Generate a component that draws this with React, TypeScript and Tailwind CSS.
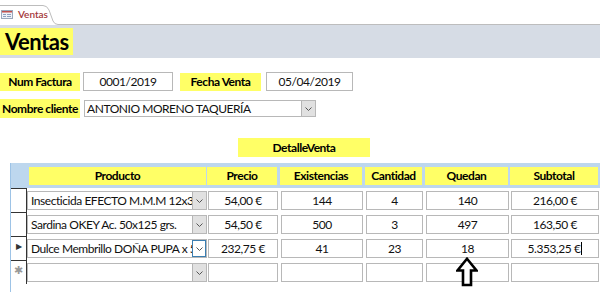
import React from "react";

const yellow = "bg-[#ffff66]";
const txt = "text-[12px] tracking-[-0.45px]";

type Row = {
  producto: string;
  precio: string;
  existencias: string;
  cantidad: string;
  quedan: string;
  subtotal: string;
  marker?: "current" | "new";
};

const rows: Row[] = [
  { producto: "Insecticida EFECTO M.M.M 12x36", precio: "54,00 €", existencias: "144", cantidad: "4", quedan: "140", subtotal: "216,00 €" },
  { producto: "Sardina OKEY Ac. 50x125 grs.", precio: "54,50 €", existencias: "500", cantidad: "3", quedan: "497", subtotal: "163,50 €" },
  { producto: "Dulce Membrillo DOÑA PUPA x 5 kg.", precio: "232,75 €", existencias: "41", cantidad: "23", quedan: "18", subtotal: "5.353,25 €", marker: "current" },
  { producto: "", precio: "", existencias: "", cantidad: "", quedan: "", subtotal: "", marker: "new" },
];

const Chevron = () => (
  <svg width="7" height="4" viewBox="0 0 7 4">
    <path d="M0.5 0.5 L3.5 3.5 L6.5 0.5" fill="none" stroke="#555" strokeWidth="1" />
  </svg>
);

const ComboArrow = ({ active }: { active?: boolean }) => (
  <div
    className={
      active
        ? "flex h-full w-[14px] shrink-0 items-center justify-center border border-[#3c7fb1] bg-white"
        : "flex h-full w-[14px] shrink-0 items-center justify-center border-l border-[#b5b5b5] bg-[#e1e1e1]"
    }
  >
    <Chevron />
  </div>
);

const Cell = ({ w, ml, children, combo, active }: { w: string; ml: string; children?: React.ReactNode; combo?: boolean; active?: boolean }) => (
  <div className={`${w} ${ml} flex h-[19px] items-stretch overflow-hidden border border-[#b8b8b8] bg-white`}>
    {combo ? (
      <>
        <div className={`${txt} flex-1 overflow-hidden whitespace-nowrap pl-[3px] leading-[17px]`}>{children}</div>
        <ComboArrow active={active} />
      </>
    ) : (
      <div className={`${txt} flex-1 whitespace-nowrap text-center leading-[17px]`}>{children}</div>
    )}
  </div>
);

const FormIcon = () => (
  <svg width="12" height="9" viewBox="0 0 12 9">
    <rect x="0.5" y="0.5" width="11" height="8" fill="#eef2f8" stroke="#9aa7bb" />
    <rect x="1" y="1" width="10" height="1.5" fill="#c0504d" />
    <rect x="2" y="4" width="3" height="1" fill="#8da0bf" />
    <rect x="6" y="4" width="4" height="1" fill="#8da0bf" />
    <rect x="2" y="6" width="3" height="1" fill="#8da0bf" />
    <rect x="6" y="6" width="4" height="1" fill="#8da0bf" />
  </svg>
);

const Label = ({ className, children }: { className: string; children: React.ReactNode }) => (
  <div className={`${yellow} ${txt} ${className} whitespace-nowrap text-center font-bold text-black`}>{children}</div>
);

export default function App() {
  return (
    <div className="relative h-[292px] w-[600px] overflow-hidden bg-white font-[Lato,sans-serif] text-[#111]">
      {/* tab strip */}
      <div className="flex h-[25px]">
        <div className="relative h-[25px] w-[58px] shrink-0">
          <svg className="absolute inset-0" width="58" height="25" viewBox="0 0 58 25">
            <path d="M0 5.5 H43 Q47 5.5 49 10 L53 21 Q54.5 24.5 58 24.5" fill="white" stroke="#bdbdbd" strokeWidth="1" />
          </svg>
          <div className="relative flex items-center gap-[5px] pl-[1px] pt-[9px]">
            <FormIcon />
            <span className="text-[10px] font-semibold leading-[11px] text-[#a4373a]">Ventas</span>
          </div>
        </div>
        <div className="flex-1 border-b border-[#bdbdbd]" />
      </div>

      {/* header band */}
      <div className="h-[33px] bg-[#d6dce5] pt-[3px]">
        <div className={`${yellow} h-[27px] w-[73px] pl-[5px] text-[22px] font-bold leading-[27px] tracking-[-0.5px] text-black`}>Ventas</div>
      </div>

      {/* main fields */}
      <div className="mt-[14px] flex h-[19px] items-center">
        <Label className="h-[18px] w-[80px] leading-[18px]">Num Factura</Label>
        <div className={`${txt} ml-[3px] h-[19px] w-[90px] border border-[#b8b8b8] text-center leading-[17px]`}>0001/2019</div>
        <Label className="ml-[7px] h-[18px] w-[81px] leading-[18px]">Fecha Venta</Label>
        <div className={`${txt} ml-[5px] h-[19px] w-[87px] border border-[#b8b8b8] text-center leading-[17px]`}>05/04/2019</div>
      </div>
      <div className="mt-[8px] flex h-[19px] items-center">
        <Label className="h-[19px] w-[80px] leading-[19px]">Nombre cliente</Label>
        <div className="ml-[4px] flex h-[17px] w-[232px] border border-[#b8b8b8]">
          <div className={`${txt} flex-1 pl-[2px] leading-[15px]`}>ANTONIO MORENO TAQUERÍA</div>
          <ComboArrow />
        </div>
      </div>

      <Label className="ml-[238px] mt-[20px] h-[19px] w-[132px] leading-[19px]">DetalleVenta</Label>

      {/* subform */}
      <div className="ml-[10px] mt-[6px] h-[130px] border-l border-[#9dc3e6]">
        <div className="flex h-[25px] items-center bg-[#bdd7ee]">
          <div className="w-[16px]" />
          <Label className="ml-[2px] h-[18px] w-[177px] leading-[18px]">Producto</Label>
          <Label className="ml-[1px] h-[18px] w-[70px] leading-[18px]">Precio</Label>
          <Label className="ml-[3px] h-[18px] w-[82px] leading-[18px]">Existencias</Label>
          <Label className="ml-[3px] h-[18px] w-[57px] leading-[18px]">Cantidad</Label>
          <Label className="ml-[3px] h-[18px] w-[83px] leading-[18px]">Quedan</Label>
          <Label className="ml-[2px] h-[18px] w-[88px] leading-[18px]">Subtotal</Label>
        </div>
        {rows.map((r, i) => (
          <div key={i} className="flex h-[24px]">
            <div className="flex w-[16px] shrink-0 items-start justify-center border-r border-t border-[#333] pt-[4px] text-[10px] leading-[10px]">
              {r.marker === "current" && <span className="text-[8px] text-[#333]">▶</span>}
              {r.marker === "new" && <span className="text-[11px] text-[#999]">✱</span>}
            </div>
            <div className="flex pt-[3px]">
              <Cell w="w-[180px]" ml="ml-0" combo active={r.marker === "current"}>{r.producto}</Cell>
              <Cell w="w-[70px]" ml="ml-[1px]">{r.precio}</Cell>
              <Cell w="w-[82px]" ml="ml-[3px]">{r.existencias}</Cell>
              <Cell w="w-[57px]" ml="ml-[3px]">{r.cantidad}</Cell>
              <Cell w="w-[83px]" ml="ml-[3px]">{r.quedan}</Cell>
              <Cell w="w-[88px]" ml="ml-[2px]">
                {r.subtotal}
                {r.marker === "current" && <span className="ml-[1px] inline-block h-[13px] w-px translate-y-[2px] bg-black" />}
              </Cell>
            </div>
          </div>
        ))}
      </div>

      {/* arrow annotation */}
      <svg className="absolute left-[456px] top-[257px]" width="22" height="30" viewBox="0 0 22 30">
        <path d="M11 1.8 L20.5 13.5 L15 13.5 L15 28 L7 28 L7 13.5 L1.5 13.5 Z" fill="white" stroke="black" strokeWidth="2.6" strokeLinejoin="miter" />
      </svg>
    </div>
  );
}
